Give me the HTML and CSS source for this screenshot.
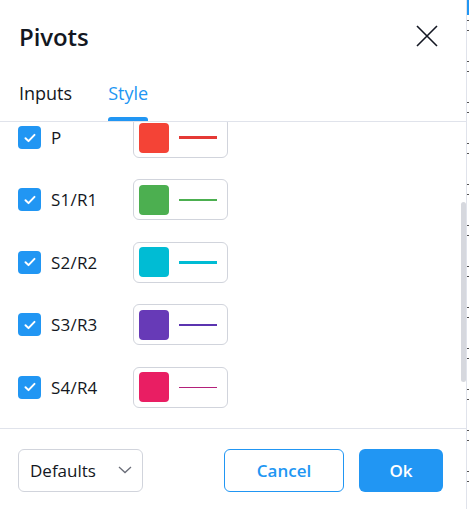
FILE: index.html
```html
<!DOCTYPE html>
<html>
<head>
<meta charset="utf-8">
<link rel="stylesheet" href="styles.css">
</head>
<body>
<div class="page">
  <div class="dialog">
    <div class="header">
      <div class="title">Pivots</div>
      <button class="close" aria-label="Close">
        <svg width="24" height="24" viewBox="0 0 24 24"><path d="M2 2L22 22M22 2L2 22" stroke="#131722" stroke-width="1.6" fill="none"/></svg>
      </button>
    </div>
    <div class="tabs">
      <div class="tab">Inputs</div>
      <div class="tab active">Style</div>
    </div>
    <div class="content">
      <div class="list">
        <div class="row">
          <span class="check"><svg width="22" height="22" viewBox="0 0 22 22"><path d="M6.5 11.2l3 2.9 6-6.2" stroke="#fff" stroke-width="2" fill="none" stroke-linecap="round" stroke-linejoin="round"/></svg></span>
          <span class="label">P</span>
          <span class="colorbtn"><span class="swatch red"></span><span class="line red-line w3"></span></span>
        </div>
        <div class="row">
          <span class="check"><svg width="22" height="22" viewBox="0 0 22 22"><path d="M6.5 11.2l3 2.9 6-6.2" stroke="#fff" stroke-width="2" fill="none" stroke-linecap="round" stroke-linejoin="round"/></svg></span>
          <span class="label">S1/R1</span>
          <span class="colorbtn"><span class="swatch green"></span><span class="line green-line w2"></span></span>
        </div>
        <div class="row">
          <span class="check"><svg width="22" height="22" viewBox="0 0 22 22"><path d="M6.5 11.2l3 2.9 6-6.2" stroke="#fff" stroke-width="2" fill="none" stroke-linecap="round" stroke-linejoin="round"/></svg></span>
          <span class="label">S2/R2</span>
          <span class="colorbtn"><span class="swatch cyan"></span><span class="line cyan-line w3"></span></span>
        </div>
        <div class="row">
          <span class="check"><svg width="22" height="22" viewBox="0 0 22 22"><path d="M6.5 11.2l3 2.9 6-6.2" stroke="#fff" stroke-width="2" fill="none" stroke-linecap="round" stroke-linejoin="round"/></svg></span>
          <span class="label">S3/R3</span>
          <span class="colorbtn"><span class="swatch purple"></span><span class="line purple-line w2"></span></span>
        </div>
        <div class="row">
          <span class="check"><svg width="22" height="22" viewBox="0 0 22 22"><path d="M6.5 11.2l3 2.9 6-6.2" stroke="#fff" stroke-width="2" fill="none" stroke-linecap="round" stroke-linejoin="round"/></svg></span>
          <span class="label">S4/R4</span>
          <span class="colorbtn"><span class="swatch pink"></span><span class="line pink-line w1"></span></span>
        </div>
      </div>
      <div class="scrollbar"></div>
    </div>
    <div class="footer">
      <button class="defaults">Defaults
        <svg width="14" height="8" viewBox="0 0 14 8"><path d="M1 1l6 5.5L13 1" stroke="#6a6d78" stroke-width="1.3" fill="none"/></svg>
      </button>
      <div class="actions">
        <button class="btn cancel">Cancel</button>
        <button class="btn ok">Ok</button>
      </div>
    </div>
  </div>
  <div class="edge"></div>
</div>
</body>
</html>
```
FILE: styles.css
```css
* { box-sizing: border-box; }
html, body { margin: 0; padding: 0; }
body {
  width: 469px;
  height: 509px;
  overflow: hidden;
  background: #fff;
  font-family: "Open Sans", "Noto Sans", sans-serif;
  color: #131722;
}
.page {
  display: flex;
  width: 469px;
  height: 509px;
}
.dialog {
  width: 467px;
  height: 509px;
  display: flex;
  flex-direction: column;
  background: #fff;
  border-right: 1px solid #e0e3eb;
}
.header {
  height: 74px;
  display: flex;
  align-items: center;
  justify-content: space-between;
  padding: 0 27px 0 19px;
}
.title {
  font-size: 24px;
  font-weight: 600;
  line-height: 30px;
  letter-spacing: -0.1px;
}
.close {
  border: 0;
  background: none;
  padding: 0;
  width: 24px;
  height: 24px;
  margin-top: -2px;
}
.close svg { display: block; }
.tabs {
  height: 48px;
  display: flex;
  gap: 36px;
  padding: 0 19px;
  border-bottom: 1px solid #e0e3eb;
}
.tab {
  font-size: 18px;
  line-height: 24px;
  padding-top: 7px;
  height: 47px;
  position: relative;
  color: #131722;
}
.tab.active { color: #2196f3; }
.tab.active::after {
  content: "";
  position: absolute;
  left: 0;
  right: 0;
  bottom: 0;
  height: 4px;
  background: #2196f3;
  border-radius: 3px 3px 0 0;
}
.content {
  flex: 1;
  position: relative;
  overflow: hidden;
  border-bottom: 1px solid #e0e3eb;
}
.list {
  margin-top: -5px;
  display: flex;
  flex-direction: column;
  gap: 21.4px;
  padding-left: 18px;
}
.row {
  height: 41px;
  display: flex;
  align-items: center;
}
.check {
  width: 23px;
  height: 23px;
  border-radius: 4px;
  background: #2196f3;
  display: flex;
  align-items: center;
  justify-content: center;
}
.check svg { display: block; }
.label {
  font-size: 17px;
  margin-left: 10px;
  width: 82px;
  letter-spacing: 0.2px;
}
.colorbtn {
  width: 95px;
  height: 41px;
  border: 1px solid #d1d4dc;
  border-radius: 6px;
  display: flex;
  align-items: center;
  padding-left: 5px;
}
.swatch {
  width: 30px;
  height: 30px;
  border-radius: 4px;
}
.line {
  width: 38px;
  margin-left: 10px;
}
.w1 { height: 1px; }
.w2 { height: 2px; }
.w3 { height: 3px; }
.red { background: #f44336; }
.red-line { background: #e53935; }
.green { background: #4caf50; }
.green-line { background: #4caf50; }
.cyan { background: #00bcd4; }
.cyan-line { background: #00bcd4; }
.purple { background: #673ab7; }
.purple-line { background: #5b34b0; }
.pink { background: #e91e63; }
.pink-line { background: #b3207a; }
.scrollbar {
  position: absolute;
  right: 0;
  top: 80px;
  width: 5px;
  height: 180px;
  border-radius: 3px;
  background: #d6d8de;
}
.footer {
  height: 80px;
  display: flex;
  align-items: center;
  justify-content: space-between;
  padding: 3px 23px 0 18px;
}
.defaults {
  width: 125px;
  height: 43px;
  border: 1px solid #d1d4dc;
  border-radius: 6px;
  background: #fff;
  font-family: inherit;
  font-size: 17px;
  color: #131722;
  display: flex;
  align-items: center;
  justify-content: space-between;
  padding: 0 10px 0 11px;
}
.defaults svg { display: block; margin-top: -2px; }
.actions {
  display: flex;
  gap: 15px;
}
.btn {
  height: 43px;
  border-radius: 6px;
  font-family: inherit;
  font-size: 17px;
  font-weight: 600;
}
.cancel {
  width: 120px;
  border: 1px solid #2196f3;
  background: #fff;
  color: #2196f3;
}
.ok {
  width: 84px;
  border: 0;
  background: #2196f3;
  color: #fff;
}
.edge {
  width: 2px;
  height: 509px;
  background:
    linear-gradient(#2196f3, #2196f3) 0 0 / 2px 15px no-repeat,
    repeating-linear-gradient(to bottom, transparent 0, transparent 20px, #555 20px, #555 21px, transparent 21px, transparent 30px, #555 30px, #555 31px, transparent 31px, transparent 41px);
}
```
